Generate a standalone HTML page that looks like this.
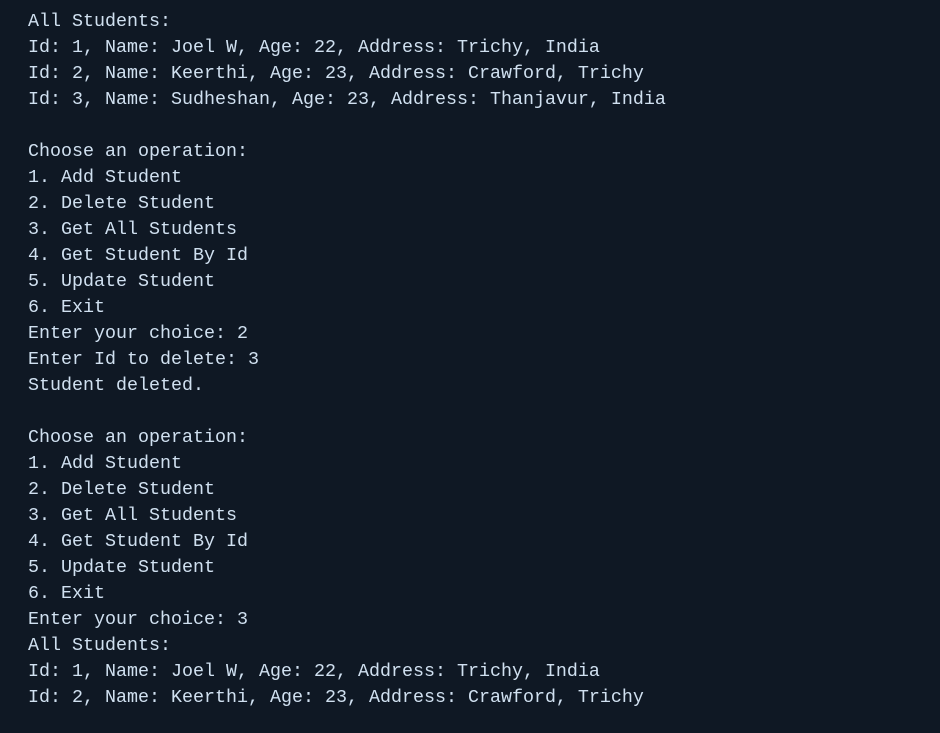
<!DOCTYPE html>
<html><head><meta charset="utf-8"><style>
html,body{margin:0;padding:0;background:#0f1824;width:940px;height:733px;overflow:hidden}
pre{margin:0;padding:9px 0 0 28px;font-family:"Liberation Mono",monospace;font-size:18.33px;line-height:26px;color:#d0e0f0}
</style></head><body><pre>All Students:
Id: 1, Name: Joel W, Age: 22, Address: Trichy, India
Id: 2, Name: Keerthi, Age: 23, Address: Crawford, Trichy
Id: 3, Name: Sudheshan, Age: 23, Address: Thanjavur, India

Choose an operation:
1. Add Student
2. Delete Student
3. Get All Students
4. Get Student By Id
5. Update Student
6. Exit
Enter your choice: 2
Enter Id to delete: 3
Student deleted.

Choose an operation:
1. Add Student
2. Delete Student
3. Get All Students
4. Get Student By Id
5. Update Student
6. Exit
Enter your choice: 3
All Students:
Id: 1, Name: Joel W, Age: 22, Address: Trichy, India
Id: 2, Name: Keerthi, Age: 23, Address: Crawford, Trichy</pre></body></html>
